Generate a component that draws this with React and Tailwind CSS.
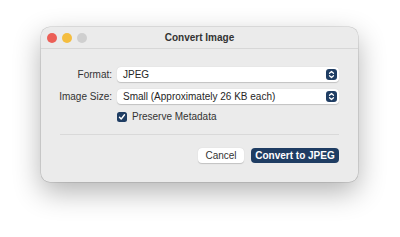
import React from "react";

const Stepper = () => (
  <span className="mr-[2px] flex h-[11px] w-[11px] items-center justify-center rounded-[3px] bg-[#1f3d63]">
    <svg width="7" height="9" viewBox="0 0 7 9" fill="none">
      <path d="M1.5 3.3 L3.5 1.5 L5.5 3.3" stroke="white" strokeWidth="1.2" strokeLinecap="round" strokeLinejoin="round" />
      <path d="M1.5 5.7 L3.5 7.5 L5.5 5.7" stroke="white" strokeWidth="1.2" strokeLinecap="round" strokeLinejoin="round" />
    </svg>
  </span>
);

const Select = ({ value }) => (
  <div className="flex h-[15px] items-center justify-between rounded-[4px] bg-white pl-[6px] text-[10px] text-[#262626] shadow-[0_0.5px_1px_rgba(0,0,0,0.18)]">
    <span>{value}</span>
    <Stepper />
  </div>
);

export default function App() {
  return (
    <div
      className="h-[237px] w-[400px] bg-white pl-[41px] pt-[27px]"
      style={{ fontFamily: '"Liberation Sans", Arial, sans-serif' }}
    >
      <div className="flex h-[155px] w-[317px] flex-col overflow-hidden rounded-[9px] bg-[#ebebeb] shadow-[0_10px_28px_rgba(0,0,0,0.3),0_0_0_0.5px_rgba(0,0,0,0.18)]">
        {/* title bar */}
        <div className="relative flex h-[22px] items-center justify-center border-b border-[#d7d7d7]">
          <div className="absolute left-[6px] top-[6px] flex gap-[5px]">
            <span className="h-[10px] w-[10px] rounded-full bg-[#ec5f57]" />
            <span className="h-[10px] w-[10px] rounded-full bg-[#f4bd3f]" />
            <span className="h-[10px] w-[10px] rounded-full bg-[#cfcfcf]" />
          </div>
          <span className="text-[10px] font-bold text-[#333]">Convert Image</span>
        </div>

        {/* form */}
        <div className="grid grid-cols-[71px_1fr] items-center gap-x-[5px] gap-y-[7px] pr-[19px] pt-[18px] text-[10px] text-[#333]">
          <span className="text-right">Format:</span>
          <Select value="JPEG" />
          <span className="text-right">Image Size:</span>
          <Select value="Small (Approximately 26 KB each)" />
          <span />
          <label className="flex items-center gap-[5px] leading-[11px]">
            <span className="flex h-[10px] w-[10px] items-center justify-center rounded-[2.5px] bg-[#1f3d63]">
              <svg width="8" height="8" viewBox="0 0 8 8" fill="none">
                <path d="M1.5 4.2 L3.2 6 L6.5 1.8" stroke="white" strokeWidth="1.4" strokeLinecap="round" strokeLinejoin="round" />
              </svg>
            </span>
            <span>Preserve Metadata</span>
          </label>
        </div>

        <div className="mx-[19px] mt-[12px] border-t border-[#d9d9d9]" />

        <div className="flex justify-end gap-[7px] pr-[19px] pt-[13px] text-[10px]">
          <button className="h-[15px] w-[46px] rounded-[4px] bg-white text-[#333] shadow-[0_0.5px_1px_rgba(0,0,0,0.18)]">
            Cancel
          </button>
          <button className="h-[15px] w-[88px] rounded-[4px] bg-[#1f3d63] font-semibold text-white">
            Convert to JPEG
          </button>
        </div>
      </div>
    </div>
  );
}
